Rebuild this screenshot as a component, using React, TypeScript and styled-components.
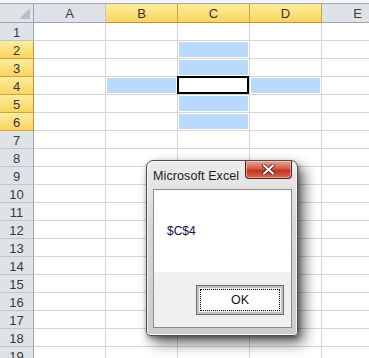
import React from "react";
import styled, { createGlobalStyle, css } from "styled-components";

const GlobalStyle = createGlobalStyle`
  html, body {
    margin: 0;
    padding: 0;
    background: #ffffff;
  }
  body {
    font-family: "Liberation Sans", Arial, sans-serif;
  }
`;

const COLS = ["A", "B", "C", "D", "E"];
const ROWS = Array.from({ length: 19 }, (_, i) => i + 1);
const SEL_COLS = ["B", "C", "D"];
const SEL_ROWS = [2, 3, 4, 5, 6];

// cells shaded blue around the active one (C4)
const BLUE = ["C2", "C3", "B4", "D4", "C5", "C6"];
const ACTIVE = "C4";

const App = () => {
  return (
    <>
      <GlobalStyle />
      <Screen>
        <TopBar />
        <Sheet>
          <Corner>
            <CornerMark />
          </Corner>
          {COLS.map((c) => (
            <ColHead key={c} $selected={SEL_COLS.includes(c)}>
              {c}
            </ColHead>
          ))}
          {ROWS.map((r) => (
            <React.Fragment key={r}>
              <RowHead $selected={SEL_ROWS.includes(r)}>{r}</RowHead>
              {COLS.map((c) => {
                const id = `${c}${r}`;
                return (
                  <Cell key={id}>
                    {BLUE.includes(id) && <Shade />}
                    {id === ACTIVE && <Active />}
                  </Cell>
                );
              })}
            </React.Fragment>
          ))}
        </Sheet>

        <Dialog>
          <TitleBar>
            <Title>Microsoft Excel</Title>
            <CloseBtn type="button">
              <svg width="13" height="11" viewBox="0 0 13 11">
                <path
                  d="M2 1.5 L11 9.5 M11 1.5 L2 9.5"
                  stroke="#4a1a14"
                  strokeWidth="3.6"
                  strokeLinecap="square"
                />
                <path
                  d="M2 1.5 L11 9.5 M11 1.5 L2 9.5"
                  stroke="#ffffff"
                  strokeWidth="2"
                  strokeLinecap="square"
                />
              </svg>
            </CloseBtn>
          </TitleBar>
          <Client>
            <Message>$C$4</Message>
            <ButtonArea>
              <OkButton type="button">
                <Focus>OK</Focus>
              </OkButton>
            </ButtonArea>
          </Client>
        </Dialog>
      </Screen>
    </>
  );
};
export default App;

const Screen = styled.div`
  position: relative;
  width: 369px;
  height: 358px;
  overflow: hidden;
  background: #ffffff;
`;

const TopBar = styled.div`
  height: 3px;
  background: #f3f5f8;
  border-bottom: 1px solid #a3abb6;
`;

const Sheet = styled.div`
  display: grid;
  grid-template-columns: 34px 72px 72px 72px 72px 72px;
  grid-template-rows: 19px repeat(19, 18px);
  font-family: "Liberation Sans", Arial, sans-serif;
  font-size: 13px;
  color: #3a3a3a;
`;

const headBase = css`
  box-sizing: border-box;
  display: flex;
  align-items: center;
  justify-content: center;
  padding-top: 1px;
  background: #dfe3e8;
  border-right: 1px solid #9ea6b0;
  border-bottom: 1px solid #9ea6b0;
`;

const goldHead = css`
  background: linear-gradient(#fdec9e, #f9d560);
  color: #333333;
`;

const Corner = styled.div`
  ${headBase};
  position: relative;
  background: #dfe3e8;
`;

const CornerMark = styled.div`
  position: absolute;
  right: 3px;
  bottom: 3px;
  width: 0;
  height: 0;
  border-left: 11px solid transparent;
  border-bottom: 11px solid #b8bfc8;
`;

const ColHead = styled.div<{ $selected?: boolean }>`
  ${headBase};
  border-right-color: #bfc5cd;
  ${(p) =>
    p.$selected &&
    css`
      ${goldHead};
      border-right-color: #d4a040;
      border-bottom-color: #c8912c;
    `}
`;

const RowHead = styled.div<{ $selected?: boolean }>`
  ${headBase};
  border-bottom-color: #bfc5cd;
  ${(p) =>
    p.$selected &&
    css`
      ${goldHead};
      border-right-color: #c8912c;
      border-bottom-color: #d4a040;
    `}
`;

const Cell = styled.div`
  box-sizing: border-box;
  position: relative;
  border-right: 1px solid #d6d6d6;
  border-bottom: 1px solid #d6d6d6;
  display: flex;
`;

const Shade = styled.div`
  flex: 1;
  margin: 1px;
  background: #b9dafd;
`;

const Active = styled.div`
  position: absolute;
  left: -1px;
  top: -1px;
  right: 0;
  bottom: 0;
  border: 2px solid #000000;
  background: #ffffff;
`;

const Dialog = styled.div`
  position: absolute;
  left: 146px;
  top: 160px;
  width: 152px;
  height: 176px;
  box-sizing: border-box;
  display: flex;
  flex-direction: column;
  padding: 0 5px 7px 6px;
  border: 1px solid #4e4e4e;
  border-radius: 7px 7px 4px 4px;
  background: linear-gradient(#ececec, #d6d6d6 40%, #cdcdcd);
  box-shadow: inset 0 0 0 1px #f6f6f6, 6px 7px 14px rgba(0, 0, 0, 0.6),
    1px 2px 4px rgba(0, 0, 0, 0.35);
`;

const TitleBar = styled.div`
  height: 28px;
  display: flex;
  align-items: flex-start;
  justify-content: space-between;
`;

const Title = styled.span`
  margin-top: 8px;
  font-size: 12.5px;
  color: #1c1c1c;
  letter-spacing: 0.1px;
`;

const CloseBtn = styled.button`
  width: 47px;
  height: 18px;
  padding: 0;
  display: flex;
  align-items: center;
  justify-content: center;
  border: 1px solid #5b2018;
  border-top: none;
  border-radius: 0 0 4px 4px;
  background: linear-gradient(#e9a596, #d35a46 45%, #c0331f 55%, #d66a52);
  box-shadow: inset 0 0 0 1px rgba(255, 210, 200, 0.55);
`;

const Client = styled.div`
  flex: 1;
  display: flex;
  flex-direction: column;
  border: 1px solid #8c8c8c;
  background: #ffffff;
`;

const Message = styled.div`
  height: 82px;
  box-sizing: border-box;
  padding: 34px 0 0 13px;
  font-size: 12px;
  color: #101040;
`;

const ButtonArea = styled.div`
  flex: 1;
  background: #f0f0f0;
  padding: 13px 0 0 42px;
`;

const OkButton = styled.button`
  width: 88px;
  height: 30px;
  padding: 2px;
  box-sizing: border-box;
  display: flex;
  border: 1px solid #6a6a6a;
  background: #f2f2f2;
  box-shadow: inset 0 0 0 2px #c4c4c4;
  font-family: "Liberation Sans", Arial, sans-serif;
  font-size: 12.5px;
  color: #111111;
`;

const Focus = styled.span`
  flex: 1;
  margin: 1px;
  display: flex;
  align-items: center;
  justify-content: center;
  border: 1px dotted #000000;
  background: #ffffff;
`;
